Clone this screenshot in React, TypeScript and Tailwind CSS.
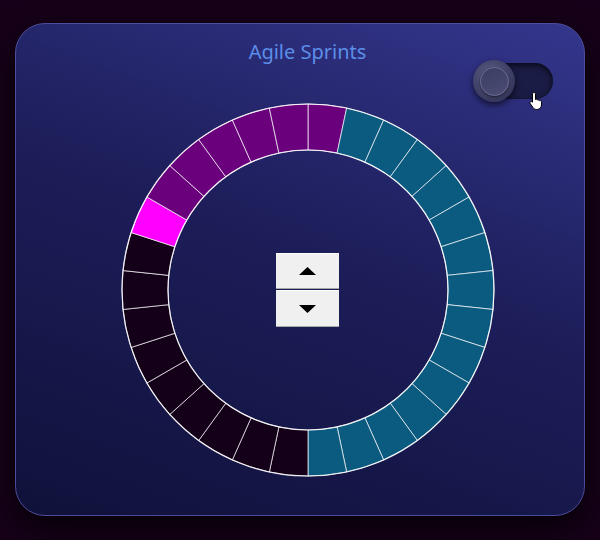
const SEGMENTS = 30
const CX = 190
const CY = 190
const R_OUT = 186
const R_IN = 140

function segColor(i: number) {
  if (i === 0 || i >= 25) return "#6b007d"
  if (i <= 14) return "#0b5a80"
  if (i === 24) return "#ff00ff"
  return "#150019"
}

function pt(r: number, deg: number) {
  const a = (deg * Math.PI) / 180
  return `${(CX + r * Math.sin(a)).toFixed(2)} ${(CY - r * Math.cos(a)).toFixed(2)}`
}

function segPath(i: number) {
  const a0 = (i * 360) / SEGMENTS
  const a1 = ((i + 1) * 360) / SEGMENTS
  return `M ${pt(R_OUT, a0)} A ${R_OUT} ${R_OUT} 0 0 1 ${pt(R_OUT, a1)} L ${pt(R_IN, a1)} A ${R_IN} ${R_IN} 0 0 0 ${pt(R_IN, a0)} Z`
}

function SprintRing() {
  return (
    <svg width="380" height="380" viewBox="0 0 380 380" className="col-start-1 row-start-1">
      {Array.from({ length: SEGMENTS }, (_, i) => (
        <path key={i} d={segPath(i)} fill={segColor(i)} stroke="rgba(255,255,255,0.7)" strokeWidth="1" />
      ))}
      <circle cx={CX} cy={CY} r={R_OUT} fill="none" stroke="rgba(255,255,255,0.85)" strokeWidth="1.2" />
      <circle cx={CX} cy={CY} r={R_IN} fill="none" stroke="rgba(255,255,255,0.85)" strokeWidth="1.2" />
    </svg>
  )
}

function Stepper() {
  return (
    <div className="col-start-1 row-start-1 flex flex-col gap-[1px] w-[63px]">
      <button className="h-[36px] bg-[#f0f0f0] border-t border-t-white border-b border-b-[#a8a8a8] flex items-center justify-center">
        <svg width="17" height="8" viewBox="0 0 17 8"><polygon points="8.5,0 17,8 0,8" fill="#000" /></svg>
      </button>
      <button className="h-[37px] bg-[#f0f0f0] border-t border-t-white border-b border-b-[#a8a8a8] flex items-center justify-center">
        <svg width="17" height="8" viewBox="0 0 17 8"><polygon points="0,0 17,0 8.5,8" fill="#000" /></svg>
      </button>
    </div>
  )
}

function Toggle() {
  return (
    <div className="absolute left-[457px] top-[36px] w-[80px] h-[42px]">
      <div className="absolute left-[4px] top-[3px] w-[76px] h-[36px] rounded-full bg-[#1a1c45] shadow-[inset_0_2px_6px_rgba(0,0,0,0.75)]" />
      <div className="absolute left-0 top-0 w-[42px] h-[42px] rounded-full bg-[radial-gradient(circle_at_40%_35%,#595b83,#36385c_70%,#2a2b4a)] shadow-[0_3px_6px_rgba(0,0,0,0.6)] flex items-center justify-center">
        <div className="w-[29px] h-[29px] rounded-full bg-[linear-gradient(160deg,#3a3c60,#4b4d76)] border border-[#6a6c94] shadow-[0_1px_2px_rgba(0,0,0,0.5)]" />
      </div>
      <svg className="absolute left-[56px] top-[31px]" width="16" height="20" viewBox="0 0 16 20">
        <path
          d="M5 1.5c.8 0 1.5.7 1.5 1.5v5.5l.3-.1c.8-.3 1.6 0 1.9.7.6-.3 1.4-.1 1.8.5.6-.3 1.5 0 1.8.7l.2.5V14c0 2.5-2 4.5-4.5 4.5H7.5c-1.4 0-2.6-.7-3.4-1.8L1.2 12.6c-.4-.6-.3-1.4.3-1.8.6-.4 1.3-.3 1.8.2l.2.2V3c0-.8.7-1.5 1.5-1.5z"
          fill="#fff"
          stroke="#000"
          strokeWidth="1"
        />
      </svg>
    </div>
  )
}

export default function App() {
  return (
    <div className="w-[600px] h-[540px] bg-[#160019] pt-[23px] pl-[15px] overflow-hidden" style={{ fontFamily: "'Noto Sans', 'Open Sans', sans-serif" }}>
      <div className="relative w-[570px] h-[493px] rounded-[30px] border border-[#4b4d9a] bg-[linear-gradient(200deg,#34368d_0%,#1d1e5a_45%,#10113a_100%)] shadow-[0_12px_30px_rgba(0,0,0,0.75)] pl-[15px] flex flex-col items-center">
        <h1 className="pt-[14px] text-[20px] leading-[28px] text-[#5b8ee8]">Agile Sprints</h1>
        <div className="mt-[34px] grid place-items-center">
          <SprintRing />
          <Stepper />
        </div>
        <Toggle />
      </div>
    </div>
  )
}
